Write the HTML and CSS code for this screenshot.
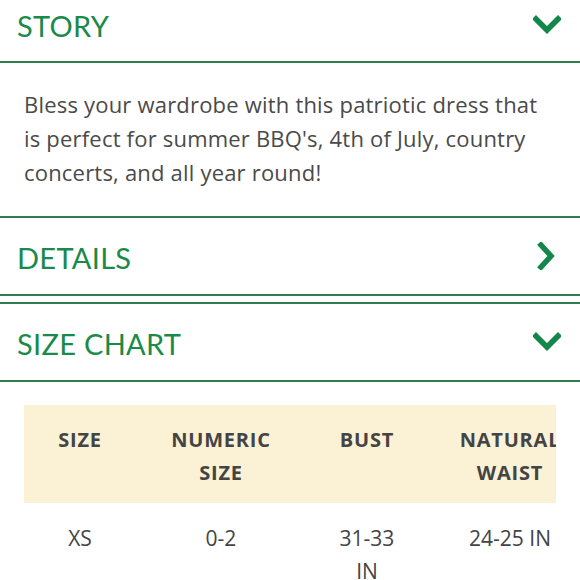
FILE: index.html
```html
<!DOCTYPE html>
<html lang="en">
<head>
<meta charset="utf-8">
<link rel="stylesheet" href="styles.css">
</head>
<body>
<div class="page">
  <section class="acc acc-first">
    <div class="acc-head">
      <h2 class="acc-title">STORY</h2>
      <svg class="chev" width="28" height="28" viewBox="0 0 28 28"><path d="M3 8 L14 19 L25 8" fill="none" stroke="currentColor" stroke-width="5.5" stroke-linecap="square"/></svg>
    </div>
    <div class="acc-body">
      <p class="story-text">Bless your wardrobe with this patriotic dress that is perfect for summer BBQ's, 4th of July, country concerts, and all year round!</p>
    </div>
  </section>
  <section class="acc acc-details">
    <div class="acc-head">
      <h2 class="acc-title">DETAILS</h2>
      <svg class="chev" width="28" height="28" viewBox="0 0 28 28"><path d="M8 3 L18 14 L8 25" fill="none" stroke="currentColor" stroke-width="5.5" stroke-linecap="square"/></svg>
    </div>
  </section>
  <section class="acc acc-chart">
    <div class="acc-head">
      <h2 class="acc-title">SIZE CHART</h2>
      <svg class="chev" width="28" height="28" viewBox="0 0 28 28"><path d="M3 8 L14 19 L25 8" fill="none" stroke="currentColor" stroke-width="5.5" stroke-linecap="square"/></svg>
    </div>
    <div class="chart">
      <div class="chart-scroll">
        <table class="size-table">
          <thead>
            <tr>
              <th class="c1">SIZE</th>
              <th class="c2">NUMERIC SIZE</th>
              <th class="c3">BUST</th>
              <th class="c4">NATURAL WAIST</th>
            </tr>
          </thead>
          <tbody>
            <tr>
              <td class="c1">XS</td>
              <td class="c2">0-2</td>
              <td class="c3">31-33 IN</td>
              <td class="c4">24-25 IN</td>
            </tr>
          </tbody>
        </table>
      </div>
    </div>
  </section>
</div>
</body>
</html>
```
FILE: styles.css
```css
html, body {
  margin: 0;
  padding: 0;
  background: #fff;
}
body {
  width: 580px;
  height: 580px;
  overflow: hidden;
  font-family: "Open Sans", "Noto Sans", sans-serif;
}
.page {
  margin-top: -12px;
}
.acc {
  border-bottom: 2px solid #2f7d4e;
}
.acc-chart {
  margin-top: 6px;
  border-top: 2px solid #2f7d4e;
  border-bottom: none;
}
.acc-head {
  box-sizing: border-box;
  height: 76px;
  display: flex;
  align-items: center;
  justify-content: space-between;
  padding: 2px 19px 0 17px;
}
.acc-first .acc-head {
  height: 73px;
}
.acc-title {
  margin: 0;
  font-family: "Lato", "Open Sans", sans-serif;
  font-size: 29px;
  font-weight: 400;
  letter-spacing: 0.3px;
  color: #1a8a4a;
}
.chev {
  display: block;
  color: #13874a;
  margin-top: -2px;
}
.acc-body {
  border-top: 2px solid #2f7d4e;
  padding: 24px 24px 27px 24px;
}
.story-text {
  margin: 0;
  font-size: 22px;
  line-height: 34px;
  letter-spacing: 0.2px;
  color: #4a4a4a;
}
.chart {
  border-top: 2px solid #2f7d4e;
  padding: 23px 24px 0 24px;
}
.chart-scroll {
  overflow: hidden;
}
.size-table {
  border-collapse: collapse;
  table-layout: fixed;
  width: 568px;
}
.size-table th,
.size-table td {
  box-sizing: border-box;
  text-align: center;
  vertical-align: top;
  line-height: 33px;
  padding: 16px 20px;
  color: #444;
}
.size-table th {
  background: #fbf1d4;
  font-size: 20px;
  font-weight: 700;
  letter-spacing: 0.8px;
  padding-top: 18px;
  padding-bottom: 14px;
}
.size-table td {
  font-size: 21px;
  font-weight: 400;
  padding-top: 19px;
}
.size-table .c1 { width: 112px; }
.size-table .c2 { width: 170px; }
.size-table .c3 { width: 122px; padding-left: 24px; padding-right: 24px; }
.size-table .c4 { width: 164px; padding-left: 8px; padding-right: 8px; }
```
